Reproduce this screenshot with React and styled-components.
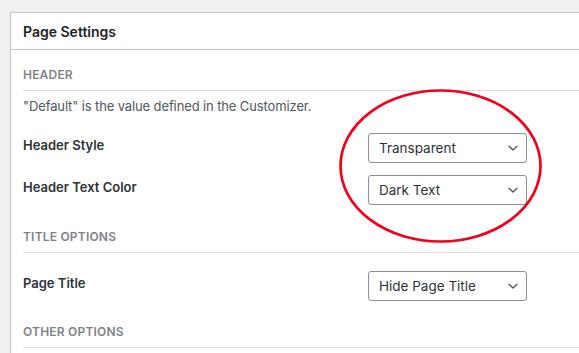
import styled, { createGlobalStyle } from "styled-components";

const GlobalStyle = createGlobalStyle`
html, body {
    margin: 0;
    padding: 0;
    background: #f0f0f1;
    overflow: hidden;
}
body {
    font-family: Inter, "Liberation Sans", sans-serif;
    -webkit-font-smoothing: antialiased;
}
`;

const Page = styled.div`
position: relative;
width: 579px;
height: 353px;
padding: 12px 0 0 10px;
box-sizing: border-box;
overflow: hidden;
`;

const Panel = styled.div`
width: 620px;
background: #fff;
border: 1px solid #c3c4c7;
border-right: none;
min-height: 400px;
`;

const PanelHead = styled.div`
height: 36px;
border-bottom: 1px solid #c3c4c7;
display: flex;
align-items: center;
padding-left: 12px;

& h2 {
    margin: 0;
    font-size: 14px;
    font-weight: 600;
    color: #1d2327;
}
`;

const PanelBody = styled.div`
padding-left: 12px;
`;

const SectionTitle = styled.h3`
margin: ${(p) => p.top}px 0 0;
padding-bottom: 7px;
border-bottom: 1px solid #dcdcde;
font-size: 12px;
line-height: 16px;
font-weight: 600;
letter-spacing: 0.2px;
color: #7e8287;
text-transform: uppercase;
`;

const Note = styled.p`
margin: 6px 0 0;
font-size: 13px;
line-height: 18px;
letter-spacing: -0.12px;
color: #50575e;
`;

const Row = styled.div`
display: grid;
grid-template-columns: 345px 159px;
align-items: start;
margin-top: ${(p) => p.top}px;
`;

const Label = styled.div`
padding-top: 3px;
font-size: 13px;
line-height: 18px;
font-weight: 600;
color: #2c3338;
`;

const Select = styled.div`
height: 30px;
box-sizing: border-box;
border: 1px solid #8c8f94;
border-radius: 3px;
display: flex;
align-items: center;
justify-content: space-between;
padding: 0 7px 0 10px;
font-size: 13.5px;
color: #2c3338;
background: #fff;
`;

const Ring = styled.svg`
position: absolute;
left: 336px;
top: 87px;
pointer-events: none;
`;

const Chevron = () => (
    <svg width="12" height="12" viewBox="0 0 12 12">
        <path d="M2 4.2 L6 8 L10 4.2" fill="none" stroke="#50575e" strokeWidth="1.4" strokeLinecap="round" strokeLinejoin="round" />
    </svg>
);

const Field = ({ label, value, top }) => (
    <Row top={top}>
        <Label>{label}</Label>
        <Select>
            <span>{value}</span>
            <Chevron />
        </Select>
    </Row>
);

export default function App() {
    return (
        <>
            <GlobalStyle />
            <Page>
                <Panel>
                    <PanelHead>
                        <h2>Page Settings</h2>
                    </PanelHead>
                    <PanelBody>
                        <SectionTitle top={17}>Header</SectionTitle>
                        <Note>"Default" is the value defined in the Customizer.</Note>
                        <Field top={18} label="Header Style" value="Transparent" />
                        <Field top={12} label="Header Text Color" value="Dark Text" />
                        <SectionTitle top={24}>Title Options</SectionTitle>
                        <Field top={18} label="Page Title" value="Hide Page Title" />
                        <SectionTitle top={23}>Other Options</SectionTitle>
                    </PanelBody>
                </Panel>
                <Ring width="210" height="160" viewBox="0 0 210 160">
                    <ellipse cx="104.5" cy="79" rx="100" ry="75.5" fill="none" stroke="#f2001a" strokeWidth="2.7" />
                </Ring>
            </Page>
        </>
    );
}
